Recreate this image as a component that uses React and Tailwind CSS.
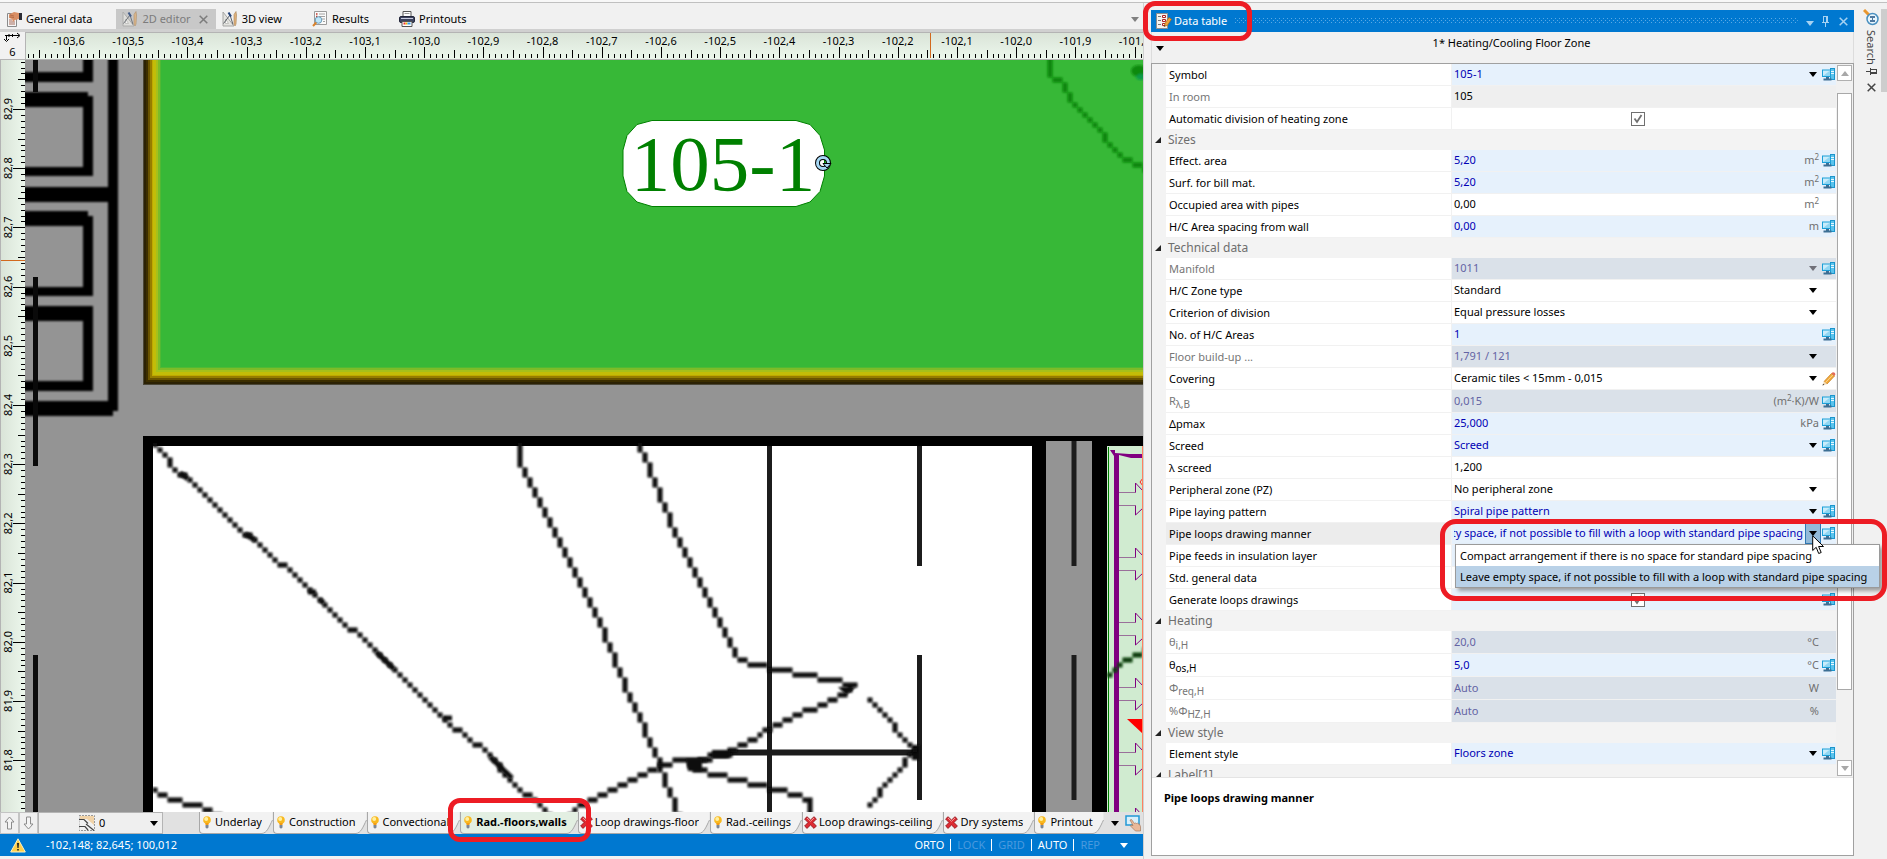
import React from "react";

/* ---------- small glyphs ---------- */

const Caret = ({ className = "fill-black" }) => (
  <svg width="8" height="5" viewBox="0 0 8 5" className={className} aria-hidden="true">
    <path d="M0 0h8L4 5z" />
  </svg>
);

const Monitor = () => (
  <svg width="13" height="13" viewBox="0 0 13 13" aria-hidden="true">
    <rect x="8.5" y="0.5" width="4" height="11" fill="#5cc3ec" stroke="#1b95cc" />
    <path d="M9 3.5h3M9 5.5h3" stroke="#e8f7ff" />
    <rect x="0.5" y="2" width="8" height="6.5" fill="#c9ecfb" stroke="#1b9fd8" />
    <path d="M1 8l7-5.500v5.500z" fill="#8fd6f3" />
    <path d="M4 9h3v1.500h2.500V12.500H1.500V10.500H4z" fill="#3c6f94" />
  </svg>
);

const Pencil = ({ size = 14 }) => (
  <svg width={size} height={size} viewBox="0 0 14 14" aria-hidden="true">
    <path d="M2 9.500L9.500 1.500l3 2.500L5 12z" fill="#f2a93b" stroke="#c27a1a" strokeWidth="0.700" />
    <path d="M3.500 10.500L11 2.800" stroke="#fbd58c" />
    <path d="M9.500 1.500l1.200-1.200c1-.6 3 .8 2.600 2.200L12.500 4z" fill="#e26a5a" />
    <path d="M2 9.500L0.500 13.500L5 12z" fill="#f3d9b0" />
    <path d="M0.500 13.500l.6-1.800 1.200 1z" fill="#333" />
  </svg>
);

const GeneralIcon = () => (
  <svg width="16" height="16" viewBox="0 0 16 16" aria-hidden="true">
    <path d="M1.500 2.500h9v13h-9z" fill="#f6f6f6" stroke="#8a8a8a" />
    <path d="M3 9h3M3 11h6M3 13h6" stroke="#a56a5a" />
    <path d="M3 3.500L8 1l5 1v6l-4 1-2 2-1-3-3-1z" fill="#d98e64" />
    <path d="M4 4l4 1M4 6l4 .5" stroke="#a85f3c" strokeWidth="0.700" />
    <path d="M13 2h3v7h-3z" fill="#2d2d35" />
  </svg>
);

const DraftIcon = ({ dim }) => (
  <svg width="16" height="16" viewBox="0 0 16 16" className={dim ? "opacity-80" : ""} aria-hidden="true">
    <path d="M1 1l11 14H1z" fill="#e4e4e0" stroke="#a6a6a4" />
    <path d="M3.500 8l3 4.500h-3z" fill="#fff" stroke="#b0b0ac" strokeWidth="0.700" />
    <path d="M8 4L1.500 12.500M8 4l3 9.500" stroke="#5a6068" fill="none" />
    <path d="M6.500 1.500L9 5.500" stroke="#23437a" strokeWidth="2" />
    <path d="M12 3.500l2-3 .5 3.500-.5 9-1 2-1-2z" fill="#e0b27c" stroke="#a88252" strokeWidth="0.600" />
  </svg>
);

const ResultsIcon = () => (
  <svg width="16" height="16" viewBox="0 0 16 16" aria-hidden="true">
    <path d="M2.500.5h12v13h-12z" fill="#fbfbfb" stroke="#9b9b9b" />
    <path d="M4 3h1.500M4 5.500h1.500" stroke="#c0392b" strokeWidth="1.500" />
    <path d="M7 3h6M7 5.500h6M10 8h3M11 10.500h2" stroke="#a0a0a0" />
    <circle cx="6.500" cy="9" r="3.300" fill="#bfe6f8" stroke="#6a9cb8" />
    <path d="M4.300 11.500L1 15" stroke="#d9822b" strokeWidth="2" />
  </svg>
);

const PrinterIcon = () => (
  <svg width="16" height="16" viewBox="0 0 16 16" aria-hidden="true">
    <path d="M4 .5h8v5H4z" fill="#fff" stroke="#555" />
    <path d="M5.500 2.500h5" stroke="#999" />
    <rect x="0.500" y="5.500" width="15" height="6" rx="1.500" fill="#3f4560" stroke="#23263a" />
    <path d="M2 7.500h12" stroke="#c9cde0" />
    <path d="M3 10.500h10v5H3z" fill="#fff" stroke="#555" />
    <path d="M4.500 12.500h2" stroke="#e33" strokeWidth="2" />
    <path d="M6.500 12.500h2" stroke="#f0b400" strokeWidth="2" />
    <path d="M8.500 12.500h3" stroke="#2a9df0" strokeWidth="2" />
  </svg>
);

const TableIcon = () => (
  <svg width="17" height="17" viewBox="0 0 17 17" aria-hidden="true">
    <path d="M.5.5h11v15H.5z" fill="#f4f2ee" stroke="#8e8e8e" />
    <path d="M2 3.500h3M2 7.500h3M2 11.500h3" stroke="#777" />
    <path d="M6.500 2.500h3v2h-3zM6.500 6.500h3v2h-3zM6.500 10.500h3v2h-3z" fill="#fff" stroke="#b02020" />
    <path d="M8 13.500L9 10.500l4-6 2.500 1.800-4 6z" fill="#f0a63a" stroke="#a8641a" strokeWidth="0.700" />
    <path d="M8 13.500l.4-1.500 1 .8z" fill="#222" />
  </svg>
);

const Bulb = () => (
  <svg width="8" height="13" viewBox="0 0 8 13" aria-hidden="true">
    <circle cx="4" cy="4" r="3.800" fill="#f9b91f" />
    <circle cx="3.200" cy="3" r="2" fill="#fff0a0" />
    <path d="M2.200 7h3.600l-.4 2H2.600z" fill="#f39c12" />
    <path d="M2.500 9h3v2.500L4 12.800 2.500 11.500z" fill="#7d8694" />
  </svg>
);

const RedCross = () => (
  <svg width="13" height="13" viewBox="0 0 13 13" aria-hidden="true">
    <path d="M3 .7L6.500 4 10 .7 12.400 3 9 6.500l3.400 3.500L10 12.400 6.500 9 3 12.400.6 10 4 6.500.6 3z" fill="#dd2c33" stroke="#8e1219" strokeWidth="0.800" />
    <path d="M3 2l3.500 3.300L10 2" stroke="#f79a9c" fill="none" />
  </svg>
);

const Cross = ({ className }) => (
  <svg width="9" height="9" viewBox="0 0 9 9" className={className} aria-hidden="true">
    <path d="M.7.7l7.600 7.600M8.300.7L.7 8.300" strokeWidth="1.500" fill="none" />
  </svg>
);

const Pin = ({ className }) => (
  <svg width="7" height="11" viewBox="0 0 7 11" className={className} aria-hidden="true">
    <path d="M1.500 0v6M4.500 0v6M5.500 0v6M1 .5h5M0 6.500h7M3.500 7v4" fill="none" />
  </svg>
);

const Ring = ({ className }) => (
  <span aria-hidden="true" className={"pointer-events-none absolute z-30 border-[#ed1c24] " + className} />
);

/* ---------- document tabs ---------- */

function DocTabs() {
  const tabs = [
    { label: "General data", icon: <GeneralIcon /> },
    { label: "2D editor", icon: <DraftIcon dim />, active: true },
    { label: "3D view", icon: <DraftIcon /> },
    { label: "Results", icon: <ResultsIcon /> },
    { label: "Printouts", icon: <PrinterIcon /> },
  ];
  return (
    <nav className="flex h-[26px] items-end justify-between bg-[#f1f1f1]">
      <div className="flex">
        {tabs.map((t) =>
          t.active ? (
            <div key={t.label} className="flex h-5 items-center bg-[#c8c8c8] pr-2">
              <button className="flex items-center gap-1 pl-1.5 text-[#7c7c7c]">
                {t.icon}
                {t.label}
              </button>
              <button aria-label="Close 2D editor" className="pl-2">
                <Cross className="stroke-[#7c7c7c]" />
              </button>
            </div>
          ) : (
            <button key={t.label} className="flex h-5 items-center gap-1 pr-6 pl-1.5">
              {t.icon}
              {t.label}
            </button>
          )
        )}
      </div>
      <button aria-label="More tabs" className="flex h-5 items-center px-1">
        <Caret className="fill-[#808080]" />
      </button>
    </nav>
  );
}

/* ---------- rulers ---------- */

const STEP = 59.2;

function TopRuler() {
  const ticks = [];
  for (let i = -7; i < 184; i++) ticks.push(i);
  const labels = ["-103,6", "-103,5", "-103,4", "-103,3", "-103,2", "-103,1", "-103,0", "-102,9", "-102,8", "-102,7", "-102,6", "-102,5", "-102,4", "-102,3", "-102,2", "-102,1", "-102,0", "-101,9", "-101,8"];
  return (
    <div className="min-w-0 flex-1 overflow-hidden border-t border-l border-[#b4b4b4] bg-linear-to-b from-[#dae4d8] to-[#ecf7ec]">
      <svg width="100%" height="26" className="block text-[11px]">
        {ticks.map((i) => {
          const x = Math.round(44 + (i * STEP) / 10) - 0.5;
          const top = i % 10 === 0 ? 14 : i % 5 === 0 ? 17 : 21;
          return <path key={i} d={`M${x} ${top}V25`} stroke="#000" />;
        })}
        {labels.map((l, i) => (
          <text key={l} x={43 + i * STEP} y="12" textAnchor="middle">
            {l}
          </text>
        ))}
        <path d="M904.5 0V25" stroke="#d2691e" />
      </svg>
    </div>
  );
}

function SideRuler() {
  const ticks = [];
  for (let i = -8; i < 119; i++) ticks.push(i);
  const labels = ["82,9", "82,8", "82,7", "82,6", "82,5", "82,4", "82,3", "82,2", "82,1", "82,0", "81,9", "81,8"];
  return (
    <div className="w-[25px] shrink-0 overflow-hidden border-l border-[#b4b4b4] bg-linear-to-r from-[#dae4d8] to-[#ecf7ec]">
      <svg width="24" height="100%" className="block text-[11px]">
        {ticks.map((i) => {
          const y = Math.round(49 + (i * STEP) / 10) + 0.5;
          const left = i % 10 === 0 ? 12 : i % 5 === 0 ? 17 : 20;
          return <path key={i} d={`M${left} ${y}H24`} stroke="#000" />;
        })}
        {labels.map((l, i) => (
          <text key={l} transform={`translate(11 ${49 + i * STEP}) rotate(-90)`} textAnchor="middle">
            {l}
          </text>
        ))}
        <path d="M0 200.5H24" stroke="#d2691e" />
      </svg>
    </div>
  );
}

/* ---------- floor plan ---------- */

const BORDER = [
  [0, "#4a4637"],
  [1, "#2c2204"],
  [3, "#3c2e00"],
  [5, "#6a5400"],
  [7, "#957d00"],
  [9, "#c0a800"],
  [10, "#c3bd08"],
  [13, "#a6c01a"],
  [15, "#7cbc28"],
  [17, "#50b933"],
  [18, "#37b837"],
];

/* The underlay is a coarse bitmap: lines are rasterised on a 5-unit grid. */
const CELL = 5;

function rasterise(points) {
  const cells = new Map();
  for (let i = 1; i < points.length; i++) {
    const [x0, y0, x1, y1] = [...points[i - 1], ...points[i]].map((v) => Math.round(v / CELL));
    const n = Math.max(Math.abs(x1 - x0), Math.abs(y1 - y0), 1);
    for (let k = 0; k <= n; k++) {
      const x = Math.round(x0 + ((x1 - x0) * k) / n);
      const y = Math.round(y0 + ((y1 - y0) * k) / n);
      cells.set(`${x},${y}`, [x, y]);
    }
  }
  return [...cells.values()];
}

const Stair = ({ points, color = "#0c0c0c" }) => (
  <path
    filter="url(#soft)"
    fill={color}
    d={rasterise(points)
      .map(([x, y]) => `M${x * CELL - 2.5} ${y * CELL - 2.5}h5v5h-5z`)
      .join("")}
  />
);

function Plan() {
  return (
    <div className="min-w-0 flex-1 overflow-hidden bg-[#949494]">
      <svg width="100%" height="100%" className="block" role="img" aria-label="Floor plan">
        <defs>
          <filter id="soft" x="-5%" y="-5%" width="110%" height="110%">
            <feGaussianBlur stdDeviation="0.900" />
          </filter>
        </defs>
        <g transform="translate(-25 -60)">
          {/* furniture on the left */}
          <path
            filter="url(#soft)"
            d="M15 40H93V82H15V72H83V40zM15 92H88V96H93V176H15V167H83V107H15zM15 211H88V216H93V296H15V287H83V226H15zM15 306H93V391H15V381H83V321H15zM108 40H118V411H113V416H15V401H108V202H15V187H108z"
          />
          <path d="M35.500 40V92M35.500 277V466M35.500 655V820" stroke="#0a0a0a" strokeWidth="5" />

          {/* heated zone */}
          {BORDER.map(([n, c]) => (
            <rect key={n} x={143 + n} y="0" width="3000" height={385 - n} fill={c} />
          ))}
          <Stair color="#0b860b" points={[[1048, 56], [1052, 73], [1063, 85], [1070, 100], [1089, 122], [1116, 149], [1135, 163], [1150, 170]]} />
          <g filter="url(#soft)">
            <ellipse cx="1139" cy="71" rx="8" ry="6" fill="#0d8a0d" />
            <ellipse cx="1141" cy="77" rx="5" ry="3" fill="#0e9a4a" />
          </g>

          {/* room below */}
          <path d="M143 436H1163V830H143z" />
          <path d="M153 446H1032V830H153z" fill="#fff" />
          <path d="M1046 441H1092V830H1046z" fill="#949494" />
          <path d="M1107 446H1163V830H1107z" fill="#d0ebd0" />
          <path d="M1074 441V566M1074 655V800M919.500 446V566M919.500 655V800M769.500 446V812" stroke="#1c1c1c" strokeWidth="5" />
          <path d="M728 752.500H918" stroke="#1c1c1c" strokeWidth="6" />
          <Stair points={[[154, 446], [182, 473], [187, 477], [245, 533], [250, 536], [313, 593], [320, 602], [378, 653], [393, 668], [447, 718], [491, 757], [512, 778], [545, 808], [555, 818]]} />
          <g filter="url(#soft)" stroke="#111" strokeWidth="5" fill="none">
            <path d="M180 473l8 6M245 534l10 6M308 592h8M320 600l4 3M376 652l18 17M443 718h9M490 757l22 21" />
          </g>
          <Stair points={[[519, 446], [522, 460], [570, 565], [603, 637], [625, 687], [659, 763], [682, 820]]} />
          <Stair points={[[638, 446], [680, 546], [738, 661], [755, 663], [857, 687], [844, 694], [777, 725], [733, 748], [692, 765], [701, 772], [762, 787], [799, 793], [810, 802], [810, 820]]} />
          <Stair points={[[565, 820], [574, 811], [618, 783], [651, 770], [680, 762], [730, 756]]} />
          <g filter="url(#soft)">
            <path d="M686 759h16v12h-14zM712 750h18v8h-18zM838 687h18l-10 8zM912 745h8v15h-8z" fill="#0a0a0a" />
          </g>
          <Stair points={[[868, 702], [917, 750], [868, 804]]} />
          <Stair points={[[153, 792], [162, 793], [175, 799], [197, 807], [218, 815]]} />

          {/* neighbouring zone */}
          <path d="M1108.500 447V820" stroke="#008000" />
          <path d="M1110 450h5v3l14 1h34v4h-32l-12-3 0 12V830h-5V456z" fill="#800080" />
          {[0, 65, 130, 195, 260, 325].map((k) => (
            <g key={k} transform={`translate(0 ${k})`} fill="none">
              <path d="M1119 492.500H1135.500M1119 505.500H1135.500" stroke="#9a6f9a" />
              <path d="M1135.500 492.500V483L1143 491M1135.500 505.500V515L1143 508" stroke="#800080" />
            </g>
          ))}
          <path d="M1143 478l-3 4 3 4" stroke="#ff2020" fill="none" />
          <Stair color="#0a3d0a" points={[[1110, 673], [1113, 668], [1123, 658], [1135, 653], [1148, 652]]} />
          <path d="M1127 719H1143V734z" fill="#ff0000" />
          <path d="M1142.500 446V820" stroke="#ff8060" />

          {/* zone label */}
          <path d="M652 120.500H796L810 124.500L820 135.500L824.500 150V176L820 191.500L810 202L796 206.500H652L637 202L627 191.500L623 176V150L627 135.500L637 124.500z" fill="#fff" stroke="#008000" />
          <text x="723" y="190" textAnchor="middle" fill="#008000" className="font-['Liberation_Serif',serif] text-[79px]">
            105-1
          </text>
          <circle cx="823" cy="163" r="5.500" fill="none" stroke="#000" strokeWidth="5" />
          <circle cx="823" cy="163" r="5.500" fill="none" stroke="#a6d8f5" strokeWidth="3" />
          <path d="M823 163.500h8l-4 4.500z" fill="#a6d8f5" stroke="#000" />
        </g>
      </svg>
    </div>
  );
}

/* ---------- layer bar and status bar ---------- */

function LayerTab({ label, icon, active }) {
  const fill = active ? "#e3efe2" : "#f2f2f2";
  return (
    <button className={"relative flex h-[22px] shrink-0 " + (active ? "font-bold" : "")}>
      <span
        className={
          "flex h-[22px] items-center rounded-bl border-b border-l border-[#a8a8a8] whitespace-nowrap " +
          (active ? "bg-[#e3efe2] " : "bg-[#f2f2f2] ") +
          (icon === "x" ? "gap-0.5 pl-px" : "gap-1 pl-[3px]")
        }
      >
        {icon === "x" ? <RedCross /> : <Bulb />}
        {label}
      </span>
      <svg width="11" height="22" viewBox="0 0 11 22" aria-hidden="true">
        <path d="M0 21.500C5 21 7 15 10.500 8V0H0z" fill={fill} />
        <path d="M0 21.500C5 21 7 15 10.500 8" fill="none" stroke="#a8a8a8" />
      </svg>
      {active && <Ring className="-top-[14px] -left-3 h-11 w-[143px] rounded-xl border-[5px]" />}
    </button>
  );
}

function LayerBar() {
  const tabs = [
    ["Underlay", "b"],
    ["Construction", "b"],
    ["Convectional", "b"],
    ["Rad.-floors,walls", "b", true],
    ["Loop drawings-floor", "x"],
    ["Rad.-ceilings", "b"],
    ["Loop drawings-ceiling", "x"],
    ["Dry systems", "x"],
    ["Printout", "b"],
  ];
  return (
    <div className="flex h-[22px] shrink-0 items-center bg-[#e1e1e1]">
      {["M5.500 1L10 6H7.500V13H3.500V6H1z", "M5.500 13L10 8H7.500V1H3.500V8H1z"].map((d, i) => (
        <button key={d} aria-label={i ? "Floor down" : "Floor up"} className="flex h-[22px] w-[19px] shrink-0 items-center justify-center border border-[#c4c4c4] bg-[#f0f0f0]">
          <svg width="11" height="14" viewBox="0 0 11 14">
            <path d={d} fill="#f4f4f4" stroke="#8c8c8c" />
          </svg>
        </button>
      ))}
      <div className="relative mr-9 flex h-[22px] w-[125px] shrink-0 items-center border border-[#b4b4b4] bg-[#efefef] pl-10">
        <svg width="16" height="16" viewBox="0 0 16 16" aria-hidden="true">
          <path d="M0 .5h15.500v15H0z" fill="#f1f1f1" stroke="#999" strokeDasharray="2 1" />
          <path d="M1 1h14v9L8 4H1z" fill="#f1d3a8" />
          <path d="M0 4.500h5l4 4M7 9l8 6.500M0 11.500h6l3 3.500" stroke="#444" strokeWidth="1.200" fill="none" />
        </svg>
        <select aria-label="Storey" className="min-w-0 flex-1 appearance-none pl-1 outline-none">
          <option>0</option>
        </select>
        <span className="pointer-events-none pr-1">
          <Caret />
        </span>
      </div>
      {tabs.map(([label, icon, active]) => (
        <LayerTab key={label} label={label} icon={icon} active={active} />
      ))}
      <button aria-label="More layers" className="ml-auto shrink-0 pl-1">
        <Caret />
      </button>
      <button aria-label="Select layer" className="shrink-0 pr-0.5 pl-1.5">
        <svg width="16" height="17" viewBox="0 0 16 17">
          <rect x="1" y="1" width="13" height="9" fill="#d8f0fb" stroke="#2299d6" strokeWidth="1.500" />
          <path d="M5 5l1.500-.5 3 4 1-.5 1 .5 1-.3 1 .8.8-.2 1.200 2.700V16H10.500L5.500 11l.5-1 2 .5z" fill="#e9b99a" stroke="#9c6b4d" strokeWidth="0.600" />
        </svg>
      </button>
    </div>
  );
}

function StatusBar() {
  const modes = [["ORTO", true], ["LOCK", false], ["GRID", false], ["AUTO", true], ["REP", false]];
  return (
    <footer className="flex h-[22px] shrink-0 items-center bg-[#0078d0] text-white">
      <svg width="16" height="15" viewBox="0 0 16 15" className="ml-2.5" aria-hidden="true">
        <path d="M8 .8L15.300 14H.7z" fill="#ffcf4a" stroke="#fff1c0" strokeLinejoin="round" />
        <path d="M7 5h2l-.4 5H7.400zM7.200 11h1.600v1.600H7.200z" fill="#222" />
      </svg>
      <span className="pl-5">-102,148; 82,645; 100,012</span>
      <div className="ml-auto flex items-center pr-5">
        {modes.map(([m, on], i) => (
          <React.Fragment key={m}>
            {i > 0 && <span className="mx-1.5 h-3 w-px bg-white" />}
            <button className={on ? "text-white" : "text-[#4a9ade]"}>{m}</button>
          </React.Fragment>
        ))}
      </div>
      <button aria-label="Status options" className="pr-[15px]">
        <Caret className="fill-white" />
      </button>
    </footer>
  );
}

/* ---------- property grid ---------- */

const S = ({ a, s }) => (
  <>
    {a}
    <sub className="text-[10px]">{s}</sub>
  </>
);
const M2 = () => (
  <>
    m<sup className="text-[8px]">2</sup>
  </>
);

const ROWS = [
  { id: "symbol", label: "Symbol", value: "105-1", tone: "auto", select: true, icon: "pc" },
  { id: "room", label: "In room", value: "105", tone: "read", off: true },
  { id: "autodiv", label: "Automatic division of heating zone", check: true },
  { section: "Sizes" },
  { id: "eff", label: "Effect. area", value: "5,20", tone: "auto", unit: <M2 />, icon: "pc" },
  { id: "surf", label: "Surf. for bill mat.", value: "5,20", tone: "auto", unit: <M2 />, icon: "pc" },
  { id: "occ", label: "Occupied area with pipes", value: "0,00", unit: <M2 /> },
  { id: "space", label: "H/C Area spacing from wall", value: "0,00", tone: "auto", unit: "m", icon: "pc" },
  { section: "Technical data" },
  { id: "manifold", label: "Manifold", value: "1011", tone: "off", off: true, select: true, dim: true, icon: "pc" },
  { id: "ztype", label: "H/C Zone type", value: "Standard", select: true },
  { id: "crit", label: "Criterion of division", value: "Equal pressure losses", select: true },
  { id: "areas", label: "No. of H/C Areas", value: "1", tone: "auto", icon: "pc" },
  { id: "build", label: "Floor build-up ...", value: "1,791 / 121", tone: "off", off: true, select: true },
  { id: "cover", label: "Covering", value: "Ceramic tiles < 15mm - 0,015", select: true, icon: "pen" },
  { id: "rlb", label: <S a="R" s="λ,B" />, value: "0,015", tone: "off", off: true, tall: true, unit: <>(m<sup className="text-[8px]">2</sup>·K)/W</>, icon: "pc" },
  { id: "dp", label: "Δpmax", value: "25,000", tone: "auto", unit: "kPa", icon: "pc" },
  { id: "screed", label: "Screed", value: "Screed", tone: "auto", select: true, icon: "pc" },
  { id: "lscreed", label: "λ screed", value: "1,200" },
  { id: "pz", label: "Peripheral zone (PZ)", value: "No peripheral zone", select: true },
  { id: "pattern", label: "Pipe laying pattern", value: "Spiral pipe pattern", tone: "auto", select: true, icon: "pc" },
  { id: "manner", label: "Pipe loops drawing manner", open: true, tone: "auto", icon: "pc" },
  { id: "feeds", label: "Pipe feeds in insulation layer", value: "", tone: "auto" },
  { id: "std", label: "Std. general data", value: "" },
  { id: "gen", label: "Generate loops drawings", check: true, tone: "auto", icon: "pc" },
  { section: "Heating" },
  { id: "ti", label: <S a="θ" s="i,H" />, value: "20,0", tone: "off", off: true, tall: true, unit: "°C" },
  { id: "tos", label: <S a="θ" s="os,H" />, value: "5,0", tone: "auto", tall: true, unit: "°C", icon: "pc" },
  { id: "freq", label: <S a="Φ" s="req,H" />, value: "Auto", tone: "off", off: true, tall: true, unit: "W" },
  { id: "pf", label: <S a="%Φ" s="HZ,H" />, value: "Auto", tone: "off", off: true, tall: true, unit: "%" },
  { section: "View style" },
  { id: "estyle", label: "Element style", value: "Floors zone", tone: "auto", select: true, icon: "pc" },
  { section: "Label[1]" },
];

const TONE = {
  auto: "bg-[#e6f1fc] text-[#0000b4]",
  off: "bg-[#dae1e9] text-[#6464a4]",
  read: "bg-[#efefef] text-black",
  plain: "bg-white text-black",
};

const OPTIONS = [
  "Compact arrangement if there is no space for standard pipe spacing",
  "Leave empty space, if not possible to fill with a loop with standard pipe spacing",
];

function OpenCombo({ id }) {
  return (
    <>
      <button
        id={id}
        role="combobox"
        aria-expanded="true"
        aria-controls="manner-list"
        className="flex h-full min-w-0 flex-1 items-center justify-end overflow-hidden whitespace-nowrap"
      >
        <span className="flex min-w-0 flex-1 justify-end overflow-hidden pr-0.5">{OPTIONS[1]}</span>
        <span className="flex h-full w-4 shrink-0 items-center justify-center border border-[#2f78b4] bg-[#92b9d8]">
          <Caret />
        </span>
      </button>
      <ul
        id="manner-list"
        role="listbox"
        aria-label="Pipe loops drawing manner"
        className="absolute top-full left-[3px] z-20 border border-[#9a9a9a] bg-white leading-[21px] whitespace-nowrap text-black shadow-[3px_3px_4px_rgba(0,0,0,0.35)]"
      >
        {OPTIONS.map((o, i) => (
          <li key={o} role="option" aria-selected={i === 1} className={"pr-3 pl-1 " + (i === 1 ? "bg-[#b9d1e7]" : "")}>
            {o}
          </li>
        ))}
      </ul>
      <Ring className="-top-1 -left-3 h-[82px] w-[447px] rounded-2xl border-[5px]" />
      <svg width="13" height="20" viewBox="0 0 13 20" className="pointer-events-none absolute top-3 right-[11px] z-40" aria-hidden="true">
        <path d="M.7.8V15.500L4.200 12.300L6.700 18.500L9.200 17.500L6.600 11.500H11.500z" fill="#fff" stroke="#000" />
      </svg>
    </>
  );
}

function Row({ r }) {
  const tone = TONE[r.tone || "plain"];
  const labelTone = r.open ? "bg-[#ececec] text-black" : r.off ? "bg-white text-[#767676]" : "bg-white text-black";
  return (
    <tr className={r.tall ? "h-[23px]" : "h-[22px]"}>
      <td className="bg-[#f3f3f3]" />
      <th scope="row" className={"border-b border-[#f1f1f1] p-0 pl-[3px] text-left font-normal " + labelTone}>
        <label htmlFor={r.id} className="block leading-5 [&_sub]:leading-[0]">
          {r.label}
        </label>
      </th>
      <td className={"border-b border-l border-[#f1f1f1] p-0 " + tone}>
        <div className={"relative flex items-center pl-0.5 " + (r.tall ? "h-[22px]" : "h-[21px]")}>
          {r.open && <OpenCombo id={r.id} />}
          {r.check && (
            <span className="relative mx-auto flex">
              <input id={r.id} type="checkbox" defaultChecked className="peer size-3.5 appearance-none border border-[#707070] bg-white" />
              <svg width="14" height="14" viewBox="0 0 14 14" className="pointer-events-none absolute inset-0 hidden peer-checked:block">
                <path d="M3.500 6.500L6 10L10.500 3" fill="none" stroke="#707070" strokeWidth="1.800" />
              </svg>
            </span>
          )}
          {!r.open && !r.check && r.select && (
            <span className="relative flex min-w-0 flex-1 items-center">
              <select id={r.id} disabled={r.off} className="min-w-0 flex-1 appearance-none outline-none disabled:opacity-100">
                <option>{r.value}</option>
              </select>
              <span className="pointer-events-none flex w-4 justify-center">
                <Caret className={r.dim ? "fill-[#707078]" : "fill-black"} />
              </span>
            </span>
          )}
          {!r.open && !r.check && !r.select && (
            <input id={r.id} defaultValue={r.value} disabled={r.off} className="min-w-0 flex-1 outline-none" />
          )}
          {r.unit && <span className="pr-0.5 text-[#707070] [&_sup]:leading-[0]">{r.unit}</span>}
          <span className="flex w-[15px] shrink-0 justify-center">
            {r.icon === "pc" && <Monitor />}
            {r.icon === "pen" && <Pencil />}
          </span>
        </div>
      </td>
    </tr>
  );
}

function PropertyGrid() {
  return (
    <div className="relative flex min-h-0 flex-1 border-b border-[#e4e4e4]">
      <div className="h-full min-w-0 flex-1 [overflow-x:visible] [overflow-y:clip]">
        <table className="w-full table-fixed border-separate border-spacing-0">
          <colgroup>
            <col className="w-3.5" />
            <col className="w-[285px]" />
            <col />
          </colgroup>
          <tbody>
            {ROWS.map((r) =>
              r.section ? (
                <tr key={r.section} className="h-5 bg-[#f3f3f3] text-xs text-[#6e6e6e]">
                  <th colSpan={3} scope="colgroup" className="p-0 text-left font-normal">
                    <button className="flex h-5 items-center gap-[7px] pl-[3px] leading-5">
                      <svg width="6" height="6" viewBox="0 0 6 6" aria-hidden="true">
                        <path d="M6 0V6H0z" fill="#222" />
                      </svg>
                      {r.section}
                    </button>
                  </th>
                </tr>
              ) : (
                <Row key={r.id} r={r} />
              )
            )}
          </tbody>
        </table>
      </div>
      <div className="flex w-[17px] shrink-0 flex-col bg-[#f1f1f1] p-px">
        <button aria-label="Scroll up" className="flex h-4 items-center justify-center border border-[#b0b0b0] bg-white">
          <Caret className="rotate-180 fill-[#a8a8a8]" />
        </button>
        <div className="mt-3 mb-[70px] flex-1 border border-[#a8a8a8] bg-white" />
        <button aria-label="Scroll down" className="flex h-4 items-center justify-center border border-[#b0b0b0] bg-white">
          <Caret className="fill-[#a8a8a8]" />
        </button>
      </div>
    </div>
  );
}

function DataPanel() {
  return (
    <section className="mt-[7px] mb-[3px] flex w-[703px] shrink-0 flex-col" aria-label="Data table">
      <header className="relative flex h-[22px] shrink-0 items-center bg-[#0078d0] pl-[5px] text-white">
        <TableIcon />
        <h2 className="px-2 pl-px">Data table</h2>
        <svg height="6" className="min-w-0 flex-1" aria-hidden="true">
          <defs>
            <pattern id="grip" width="4" height="4" patternUnits="userSpaceOnUse">
              <path d="M0 .5h1M2 2.500h1" stroke="#5aa9e4" />
            </pattern>
          </defs>
          <rect width="100%" height="6" fill="url(#grip)" />
        </svg>
        <button aria-label="Panel menu" className="pt-1 pl-2">
          <Caret className="fill-[#a6d2f2]" />
        </button>
        <button aria-label="Pin panel" className="pl-2">
          <Pin className="stroke-[#a6d2f2]" />
        </button>
        <button aria-label="Close panel" className="pr-1.5 pl-2.5">
          <Cross className="stroke-[#a6d2f2]" />
        </button>
        <Ring className="-top-[9px] -left-2 h-10 w-[109px] rounded-xl border-[5px]" />
      </header>
      <div className="relative h-[31px] shrink-0 border-x border-[#dcdcdc] bg-[#f1f1f1]">
        <p className="pt-[3px] pl-[18px] text-center leading-4">1* Heating/Cooling Floor Zone</p>
        <button aria-label="Element list" className="absolute top-3.5 left-1">
          <Caret />
        </button>
      </div>
      <div className="flex min-h-0 flex-1 flex-col border border-[#a0a0a0] bg-white">
        <PropertyGrid />
        <p className="h-[77px] shrink-0 px-3 py-3 leading-4 font-bold">Pipe loops drawing manner</p>
      </div>
    </section>
  );
}

function SearchDock() {
  return (
    <aside className="flex w-[33px] shrink-0 justify-end bg-[#f1f1f1] pt-1.5">
      <div className="flex w-5 flex-col items-center">
        <svg width="16" height="17" viewBox="0 0 16 17" aria-hidden="true">
          <path d="M1 1l5 5" stroke="#e8962e" strokeWidth="3" />
          <circle cx="9.500" cy="10" r="5.500" fill="#e8f5fc" stroke="#4a90c0" strokeWidth="1.500" />
          <path d="M7 8h5M7 12h5M9 10h1" stroke="#1c4f80" strokeWidth="1.500" />
        </svg>
        <button className="pt-1 text-[11px] leading-5 text-[#444] [writing-mode:vertical-rl]">Search</button>
        <button aria-label="Pin search" className="pt-px">
          <Pin className="rotate-90 stroke-[#444]" />
        </button>
        <button aria-label="Close search" className="pt-1.5">
          <Cross className="stroke-[#444]" />
        </button>
      </div>
      <div className="h-[83px] w-1.5 bg-[#cdcdcd]" />
    </aside>
  );
}

export default function App() {
  return (
    <div className="flex h-screen flex-col overflow-hidden bg-[#f1f1f1] font-['Noto_Sans','Open_Sans',sans-serif] text-[11px] text-black">
      <div className="h-[3px] shrink-0 border-b border-[#c0c0c0] bg-[#f8f8f8]" />
      <div className="flex min-h-0 flex-1">
        <main className="mb-[3px] flex min-w-0 flex-1 flex-col">
          <DocTabs />
          <div className="h-[3px] shrink-0 bg-[#d0d0d0]" />
          <div className="flex h-7 shrink-0 border-b border-[#b4b4b4]">
            <div className="relative flex w-[25px] shrink-0 flex-col items-center justify-between">
              <svg width="17" height="10" viewBox="0 0 17 10" aria-hidden="true">
                <path d="M2.500 8V4M1 3.500h14M0 7l2.500 2.500L5 7M13 1l3 2.500L13 6M8.500 2v3M5 2v3" stroke="#000" fill="none" />
              </svg>
              <span className="leading-[14px]">6</span>
            </div>
            <TopRuler />
          </div>
          <div className="flex min-h-0 flex-1">
            <SideRuler />
            <Plan />
          </div>
          <LayerBar />
          <StatusBar />
        </main>
        <div className="w-2 shrink-0 border-l border-[#d0d0d0]" />
        <DataPanel />
        <SearchDock />
      </div>
    </div>
  );
}
